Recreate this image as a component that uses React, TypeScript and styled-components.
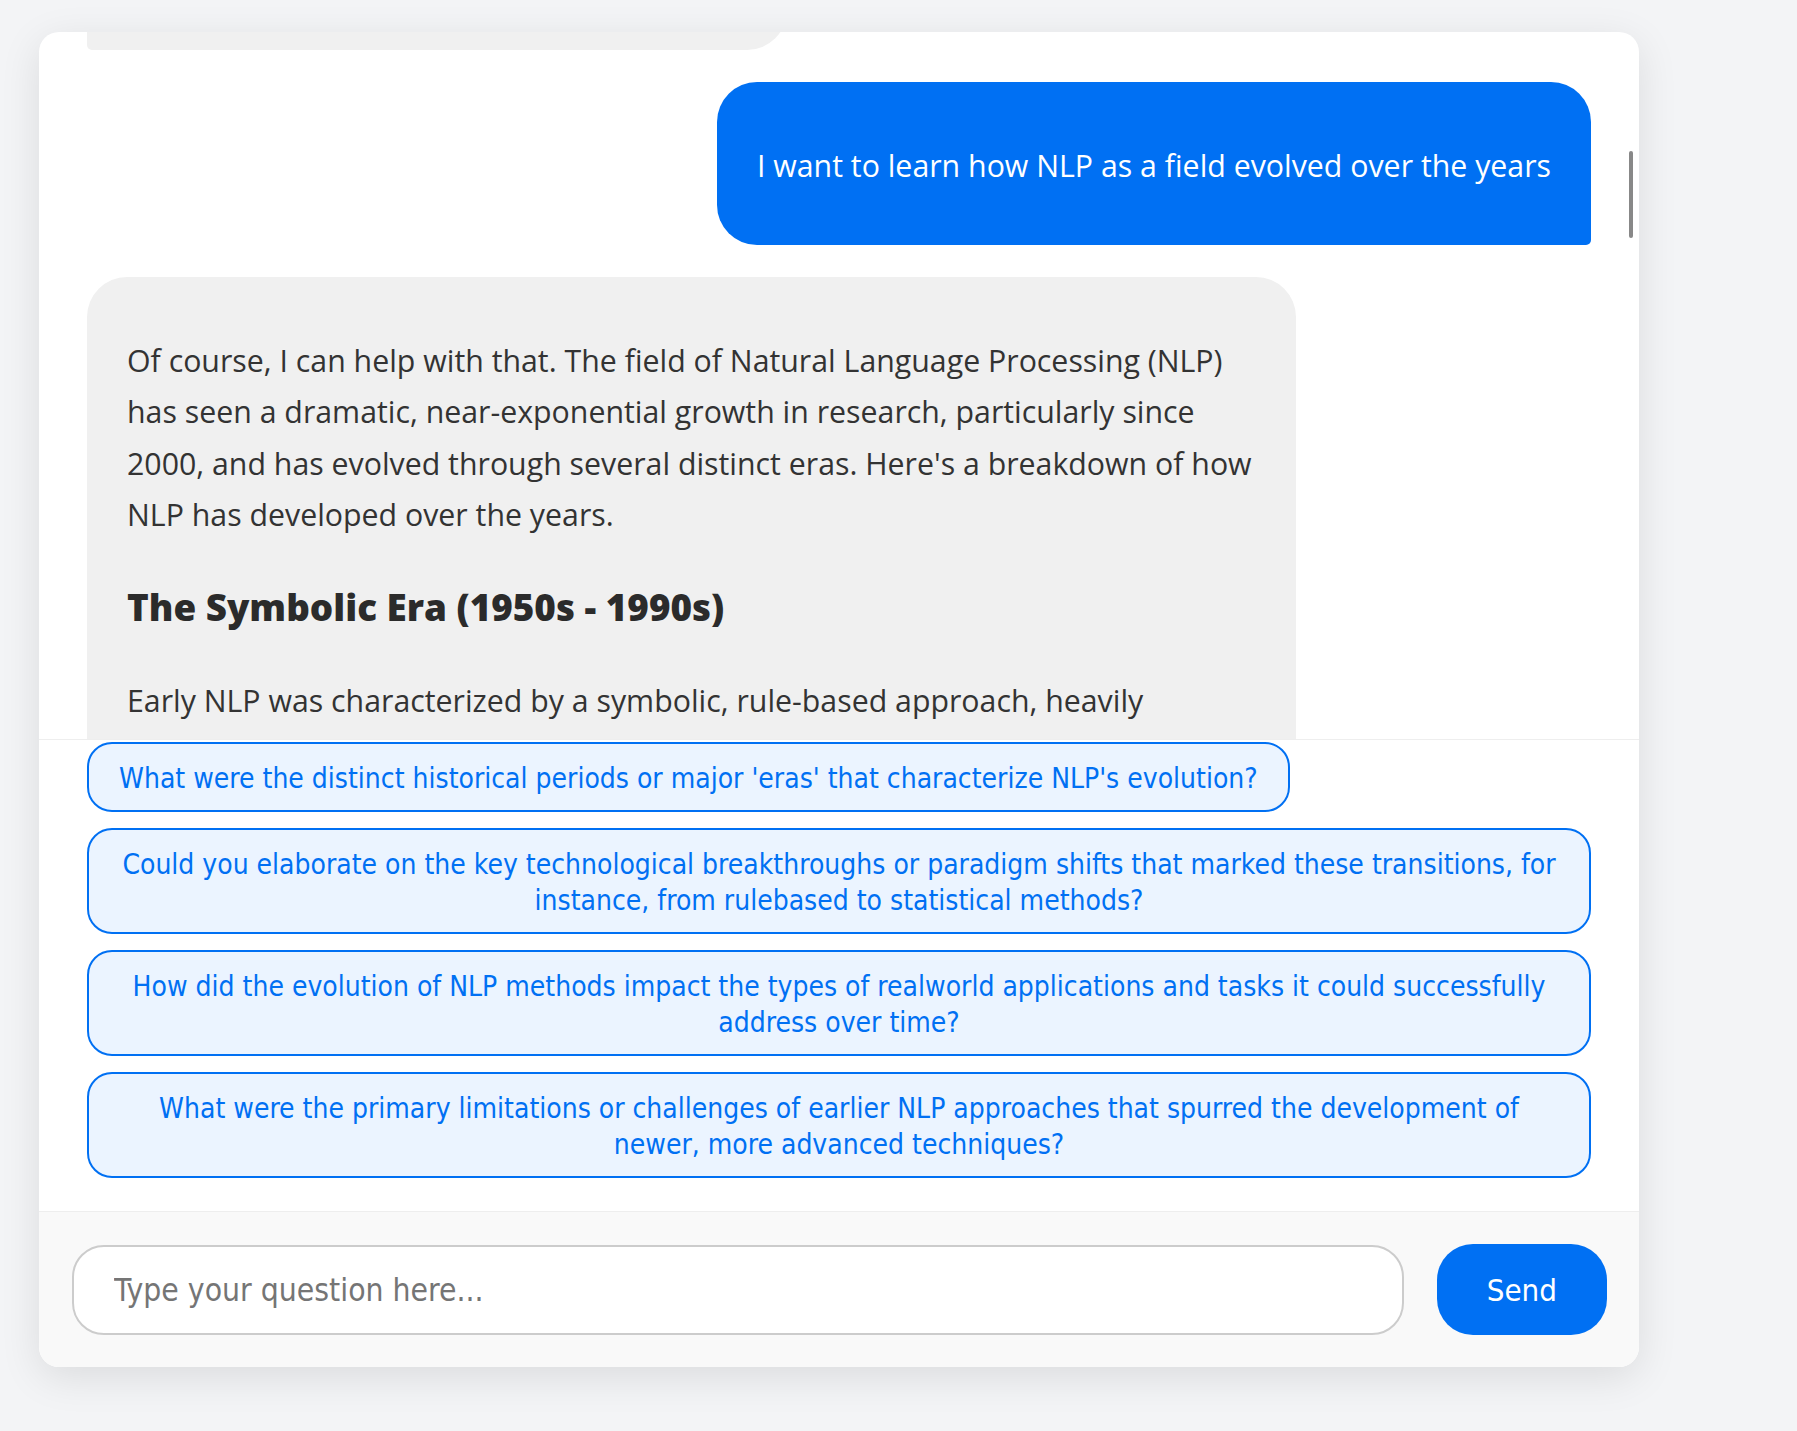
import React, { useLayoutEffect, useRef } from "react";
import styled, { createGlobalStyle } from "styled-components";

const GlobalStyle = createGlobalStyle`
  html, body {
    margin: 0;
    padding: 0;
    background: #f3f4f6;
  }
  body {
    font-family: "Open Sans", "Noto Sans", sans-serif;
    color: #333;
  }
  * { box-sizing: border-box; }
`;

const Page = styled.div`
  height: 100vh;
  padding: 32px 0 0 39px;
`;

const Card = styled.div`
  width: 1600px;
  height: calc(100vh - 96px);
  background: #ffffff;
  border-radius: 20px;
  box-shadow: 0 10px 40px rgba(0, 0, 0, 0.1);
  display: flex;
  flex-direction: column;
  overflow: hidden;
`;

const MessagePane = styled.div`
  flex: 1;
  min-height: 0;
  position: relative;
`;

const MessageList = styled.div`
  position: relative;
  height: 100%;
  overflow-y: auto;
  scrollbar-width: none;
  &::-webkit-scrollbar { display: none; }
  padding: 32px 48px;
  display: flex;
  flex-direction: column;
  gap: 32px;
`;

const ScrollThumb = styled.div`
  position: absolute;
  top: 119px;
  right: 6px;
  width: 4px;
  height: 87px;
  border-radius: 2px;
  background: #888888;
`;

const Bubble = styled.div<{ $from: "user" | "assistant" }>`
  flex: none;
  max-width: 80.4%;
  padding: 26px 40px 22px;
  font-size: 30.3px;
  line-height: 51.2px;
  align-self: ${(p) => (p.$from === "user" ? "flex-end" : "flex-start")};
  background: ${(p) => (p.$from === "user" ? "#0070f3" : "#f0f0f0")};
  color: ${(p) => (p.$from === "user" ? "#ffffff" : "#333333")};
  border-radius: ${(p) =>
    p.$from === "user" ? "40px 40px 5px 40px" : "40px 40px 40px 5px"};
`;

const EarlierBubble = styled(Bubble)`
  width: 700px;
  height: 160px;
`;

const Para = styled.p`
  margin: 32px 0;
`;

const Heading = styled.h3`
  margin: 37.4px 0;
  font-size: 36.8px;
  line-height: 60px;
  font-weight: 800;
  color: #2b2b2b;
`;

const Suggestions = styled.div`
  border-top: 1px solid #eeeeee;
  padding: 2px 48px 33px;
  display: flex;
  flex-direction: column;
  align-items: flex-start;
  gap: 16px;
`;

const SuggestionButton = styled.button`
  font-family: "DejaVu Sans Condensed", "DejaVu Sans", sans-serif;
  font-stretch: condensed;
  font-size: 28px;
  line-height: 36px;
  padding: 17px 30px 13px;
  border: 2px solid #0070f3;
  border-radius: 25px;
  background: #ebf4ff;
  color: #0070f3;
  text-align: center;
  cursor: pointer;
  max-width: 100%;
`;

const Footer = styled.div`
  border-top: 1px solid #eeeeee;
  background: #f9f9f9;
  padding: 32px 32px 32px 33px;
  display: flex;
  align-items: center;
  gap: 33px;
`;

const QuestionInput = styled.input`
  flex: 1;
  height: 90px;
  padding: 0 40px;
  border: 2px solid #cccccc;
  border-radius: 32px;
  background: #ffffff;
  font-family: "DejaVu Sans Condensed", "DejaVu Sans", sans-serif;
  font-stretch: condensed;
  font-size: 31.6px;
  color: #333;
  outline: none;
  &::placeholder {
    color: #757575;
  }
`;

const SendButton = styled.button`
  height: 91px;
  padding: 0 50px;
  border: none;
  border-radius: 36px;
  background: #0070f3;
  color: #ffffff;
  font-family: "DejaVu Sans Condensed", "DejaVu Sans", sans-serif;
  font-stretch: condensed;
  font-size: 31px;
  cursor: pointer;
`;

const suggestions = [
  "What were the distinct historical periods or major 'eras' that characterize NLP's evolution?",
  "Could you elaborate on the key technological breakthroughs or paradigm shifts that marked these transitions, for instance, from rulebased to statistical methods?",
  "How did the evolution of NLP methods impact the types of realworld applications and tasks it could successfully address over time?",
  "What were the primary limitations or challenges of earlier NLP approaches that spurred the development of newer, more advanced techniques?",
];

export default function App() {
  const listRef = useRef<HTMLDivElement>(null);
  const earlierRef = useRef<HTMLDivElement>(null);

  useLayoutEffect(() => {
    const list = listRef.current;
    const earlier = earlierRef.current;
    if (list && earlier) {
      list.scrollTop = earlier.offsetTop + earlier.offsetHeight - 18;
    }
  }, []);

  return (
    <>
      <GlobalStyle />
      <Page>
        <Card>
          <MessagePane>
            <MessageList ref={listRef}>
              <EarlierBubble ref={earlierRef} $from="assistant" aria-hidden="true" />
              <Bubble $from="user">
                <Para>I want to learn how NLP as a field evolved over the years</Para>
              </Bubble>
              <Bubble $from="assistant">
                <Para>
                  Of course, I can help with that. The field of Natural Language Processing (NLP)
                  has seen a dramatic, near-exponential growth in research, particularly since
                  2000, and has evolved through several distinct eras. Here's a breakdown of how
                  NLP has developed over the years.
                </Para>
                <Heading>The Symbolic Era (1950s - 1990s)</Heading>
                <Para>
                  Early NLP was characterized by a symbolic, rule-based approach, heavily
                </Para>
              </Bubble>
            </MessageList>
            <ScrollThumb />
          </MessagePane>
          <Suggestions>
            {suggestions.map((s) => (
              <SuggestionButton key={s} type="button">
                {s}
              </SuggestionButton>
            ))}
          </Suggestions>
          <Footer>
            <QuestionInput type="text" placeholder="Type your question here..." />
            <SendButton type="button">Send</SendButton>
          </Footer>
        </Card>
      </Page>
    </>
  );
}
